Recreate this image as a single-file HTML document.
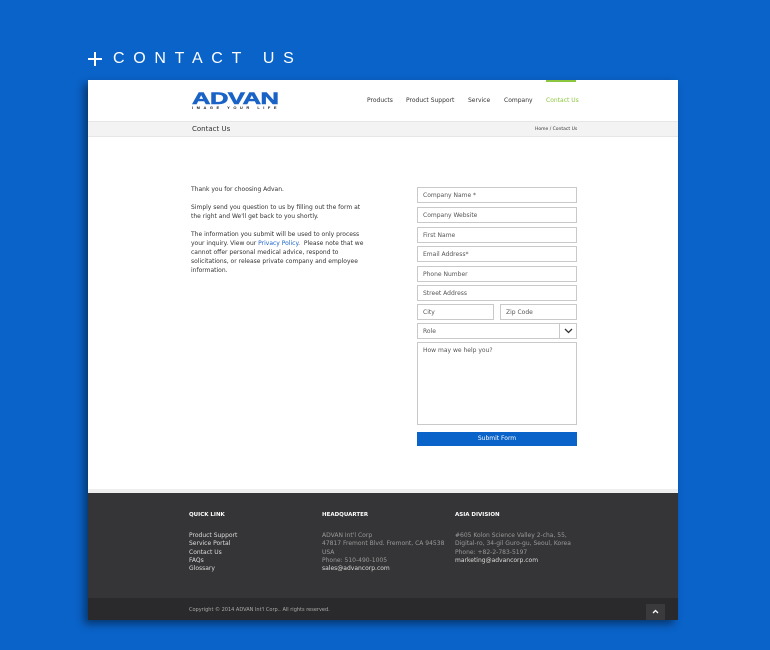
<!DOCTYPE html>
<html><head><meta charset="utf-8"><style>
*{margin:0;padding:0;box-sizing:border-box}
body{width:770px;height:650px;background:#0a63c9;font-family:"DejaVu Sans","Liberation Sans",sans-serif;position:relative;overflow:hidden}
.a{position:absolute}
.t{font-size:16px;color:#fff;letter-spacing:8.7px;font-family:"Liberation Sans",sans-serif;top:50px;left:113px}
.card{left:88px;top:80px;width:590px;height:540px;background:#fff;box-shadow:-4px 4px 8px rgba(0,0,0,.45)}
.nav{font-size:6px;color:#333;top:97px}
.in{border:1px solid #c9c9c9;height:16px;font-size:6px;color:#555;padding:4px 0 0 5px;background:#fff}
.p{font-size:6px;color:#333;line-height:9px;left:191px}
.f{font-size:6px;color:#ddd;line-height:8.3px}
.g{color:#999}
.h{font-size:5.5px;color:#fff;font-weight:bold;top:512px}
</style></head><body>
<div class="a" style="left:88px;top:58px;width:14px;height:1.5px;background:#fff"></div>
<div class="a" style="left:94.3px;top:52px;width:1.5px;height:14px;background:#fff"></div>
<div class="a t">CONTACT US</div>
<div class="a card"></div>
<div class="a" style="left:88px;top:121px;width:590px;height:16px;background:#f3f3f3;border-top:1px solid #e6e6e6;border-bottom:1px solid #e6e6e6"></div>
<div class="a" style="left:192px;top:91px;font:900 17px 'Liberation Sans',sans-serif;color:#1a63c6;letter-spacing:-0.3px;transform:scaleX(1.5);transform-origin:left;line-height:16px;-webkit-text-stroke:0.6px #1a63c6">ADVAN</div>
<div class="a" style="left:192px;top:105px;font:bold 4px 'Liberation Sans',sans-serif;color:#222;letter-spacing:3.5px">IMAGE YOUR LIFE</div>
<div class="a nav" style="left:367px">Products</div>
<div class="a nav" style="left:406px">Product Support</div>
<div class="a nav" style="left:468px">Service</div>
<div class="a nav" style="left:504px">Company</div>
<div class="a nav" style="left:546px;color:#8cc63f">Contact Us</div>
<div class="a" style="left:546px;top:80px;width:30px;height:2px;background:#8cc63f"></div>
<div class="a" style="left:192px;top:125px;font-size:7px;color:#333">Contact Us</div>
<div class="a" style="left:535px;top:127px;font-size:4.5px;color:#333">Home / Contact Us</div>
<div class="a p" style="top:185px">Thank you for choosing Advan.</div>
<div class="a p" style="top:203px">Simply send you question to us by filling out the form at<br>the right and We'll get back to you shortly.</div>
<div class="a p" style="top:230px">The information you submit will be used to only process<br>your inquiry. View our <span style="color:#1a63c6">Privacy Policy</span>.&nbsp; Please note that we<br>cannot offer personal medical advice, respond to<br>solicitations, or release private company and employee<br>information.</div>
<div class="a in" style="left:417px;top:187px;width:160px">Company Name *</div>
<div class="a in" style="left:417px;top:207px;width:160px">Company Website</div>
<div class="a in" style="left:417px;top:227px;width:160px">First Name</div>
<div class="a in" style="left:417px;top:246px;width:160px">Email Address*</div>
<div class="a in" style="left:417px;top:266px;width:160px">Phone Number</div>
<div class="a in" style="left:417px;top:285px;width:160px">Street Address</div>
<div class="a in" style="left:417px;top:304px;width:77px">City</div>
<div class="a in" style="left:500px;top:304px;width:77px">Zip Code</div>
<div class="a in" style="left:417px;top:323px;width:160px">Role</div>
<div class="a" style="left:559px;top:323px;width:1px;height:16px;background:#c9c9c9"></div>
<svg class="a" style="left:564px;top:328px" width="9" height="6"><path d="M1 1L4.5 4.5L8 1" stroke="#333" stroke-width="1.3" fill="none"/></svg>
<div class="a in" style="left:417px;top:342px;width:160px;height:83px">How may we help you?</div>
<div class="a" style="left:417px;top:432px;width:160px;height:14px;background:#0a63c9;color:#fff;font-size:6px;text-align:center;line-height:14px">Submit Form</div>
<div class="a" style="left:88px;top:489px;width:590px;height:4px;background:#eee"></div>
<div class="a" style="left:88px;top:493px;width:590px;height:105px;background:#353537"></div>
<div class="a" style="left:88px;top:598px;width:590px;height:22px;background:#2a2a2c"></div>
<div class="a h" style="left:189px">QUICK LINK</div>
<div class="a h" style="left:322px">HEADQUARTER</div>
<div class="a h" style="left:455px">ASIA DIVISION</div>
<div class="a f" style="left:189px;top:532px">Product Support<br>Service Portal<br>Contact Us<br>FAQs<br>Glossary</div>
<div class="a f" style="left:322px;top:532px"><span class="g">ADVAN Int'l Corp<br>47817 Fremont Blvd. Fremont, CA 94538<br>USA<br>Phone: 510-490-1005</span><br>sales@advancorp.com</div>
<div class="a f" style="left:455px;top:532px"><span class="g">#605 Kolon Science Valley 2-cha, 55,<br>Digital-ro, 34-gil Guro-gu, Seoul, Korea<br>Phone: +82-2-783-5197</span><br>marketing@advancorp.com</div>
<div class="a" style="left:189px;top:607px;font-size:5px;color:#aaa">Copyright © 2014 ADVAN Int'l Corp.. All rights reserved.</div>
<div class="a" style="left:646px;top:604px;width:19px;height:16px;background:#3a3a3c"></div>
<svg class="a" style="left:652px;top:609px" width="7" height="5"><path d="M1 4L3.5 1.5L6 4" stroke="#fff" stroke-width="1.3" fill="none"/></svg>
</body></html>
